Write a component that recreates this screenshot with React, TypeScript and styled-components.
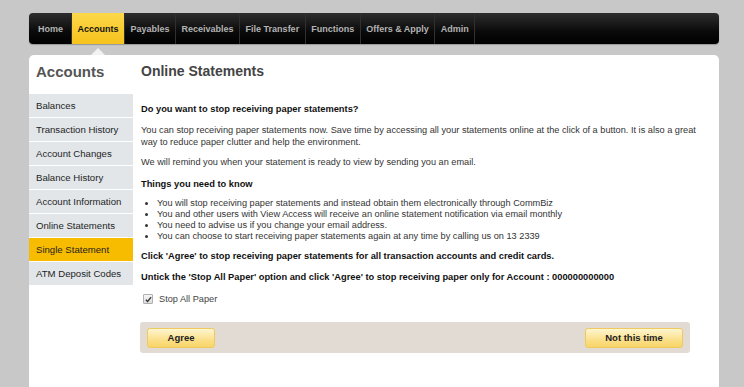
import React from 'react'
import styled, { createGlobalStyle } from 'styled-components'

const GlobalStyle = createGlobalStyle`
  html, body {
    margin: 0;
    padding: 0;
    background: #c8c8c8;
    font-family: 'Liberation Sans', Arial, sans-serif;
  }
`

const navItems = [
  'Home',
  'Accounts',
  'Payables',
  'Receivables',
  'File Transfer',
  'Functions',
  'Offers & Apply',
  'Admin',
]

const menuItems = [
  'Balances',
  'Transaction History',
  'Account Changes',
  'Balance History',
  'Account Information',
  'Online Statements',
  'Single Statement',
  'ATM Deposit Codes',
]

const bullets = [
  'You will stop receiving paper statements and instead obtain them electronically through CommBiz',
  'You and other users with View Access will receive an online statement notification via email monthly',
  'You need to advise us if you change your email address.',
  'You can choose to start receiving paper statements again at any time by calling us on 13 2339',
]

const Page = styled.div`
  padding: 13px 25px 0 29px;
  height: 387px;
  box-sizing: border-box;
  display: flex;
  flex-direction: column;
  overflow: hidden;
`
const NavBar = styled.nav`
  display: flex;
  height: 31px;
  border-radius: 4px;
  background: linear-gradient(#2e2e2e, #0a0a0a 60%, #000);
  box-shadow: 0 1px 1px rgba(0, 0, 0, 0.25);
`
const NavItem = styled.div<{ $active?: boolean }>`
  position: relative;
  display: flex;
  align-items: center;
  padding: 0 5.5px;
  font-size: 9px;
  font-weight: bold;
  color: ${(p) => (p.$active ? '#111' : '#b4b4b4')};
  background: ${(p) => (p.$active ? 'linear-gradient(#fcd84a, #f6c21c)' : 'transparent')};
  border-right: 1px solid #303030;
  &:first-child {
    padding-left: 9px;
    padding-right: 8px;
    border-radius: 4px 0 0 4px;
  }
  ${(p) =>
    p.$active &&
    `
    &::after {
      content: '';
      position: absolute;
      left: 50%;
      bottom: -11px;
      margin-left: -7px;
      border-left: 7px solid transparent;
      border-right: 7px solid transparent;
      border-bottom: 7px solid #f2f2f2;
    }
  `}
`
const Panel = styled.div`
  flex: 1;
  margin-top: 11px;
  display: flex;
  background: #fff;
  border-radius: 5px 5px 0 0;
`
const Sidebar = styled.aside`
  width: 104px;
  flex-shrink: 0;
`
const SideTitle = styled.h2`
  margin: 0;
  height: 39px;
  padding: 7px 0 0 7px;
  box-sizing: border-box;
  font-size: 15px;
  line-height: 20px;
  color: #555;
`
const MenuItem = styled.div<{ $active?: boolean }>`
  height: 23px;
  display: flex;
  align-items: center;
  padding-left: 7px;
  border-bottom: 1px solid #fff;
  font-size: 9.6px;
  color: #1e1e1e;
  background: ${(p) => (p.$active ? '#f7bb00' : '#e2e6e9')};
`
const Main = styled.main`
  flex: 1;
  padding: 6px 14px 0 8px;
  font-size: 9.2px;
  line-height: 12px;
  color: #333;
`
const Title = styled.h1`
  margin: 0 0 22px;
  font-size: 14px;
  line-height: 20px;
  color: #444;
`
const Para = styled.p<{ $strong?: boolean; $gap?: number }>`
  margin: 0 0 ${(p) => p.$gap ?? 8}px;
  font-size: ${(p) => (p.$strong ? '9.3px' : 'inherit')};
  font-weight: ${(p) => (p.$strong ? 'bold' : 'normal')};
  color: ${(p) => (p.$strong ? '#111' : '#333')};
`
const List = styled.ul`
  margin: 0 0 8px;
  padding-left: 16px;
  line-height: 11px;
`
const CheckRow = styled.label`
  display: flex;
  align-items: center;
  gap: 6px;
  margin: 1px 0 17px 2px;
  color: #444;
`
const CheckBox = styled.span`
  width: 8px;
  height: 8px;
  border: 1px solid #b0b0b0;
  border-radius: 1px;
  background: linear-gradient(#f6f6f6, #dcdcdc);
  display: flex;
  align-items: center;
  justify-content: center;
`
const ButtonBar = styled.div`
  display: flex;
  justify-content: space-between;
  align-items: center;
  height: 31px;
  padding: 0 7px;
  margin: 0 15px 0 -1px;
  border-radius: 3px;
  background: #e1dbd3;
`
const Button = styled.button<{ $width: number }>`
  width: ${(p) => p.$width}px;
  height: 20px;
  border: 1px solid #efca5e;
  border-radius: 3px;
  background: linear-gradient(#fff6d0, #fbe08a 60%, #f8d468);
  font-family: inherit;
  font-size: 9.5px;
  font-weight: bold;
  color: #222;
  padding: 0;
`

export default function App() {
  return (
    <>
      <GlobalStyle />
      <Page>
        <NavBar>
          {navItems.map((item) => (
            <NavItem key={item} $active={item === 'Accounts'}>
              {item}
            </NavItem>
          ))}
        </NavBar>
        <Panel>
          <Sidebar>
            <SideTitle>Accounts</SideTitle>
            {menuItems.map((item) => (
              <MenuItem key={item} $active={item === 'Single Statement'}>
                {item}
              </MenuItem>
            ))}
          </Sidebar>
          <Main>
            <Title>Online Statements</Title>
            <Para $strong $gap={9}>Do you want to stop receiving paper statements?</Para>
            <Para>
              You can stop receiving paper statements now. Save time by accessing all your
              statements online at the click of a button. It is also a great way to reduce paper
              clutter and help the environment.
            </Para>
            <Para $gap={10}>We will remind you when your statement is ready to view by sending you an email.</Para>
            <Para $strong>Things you need to know</Para>
            <List>
              {bullets.map((b) => (
                <li key={b}>{b}</li>
              ))}
            </List>
            <Para $strong $gap={9}>
              Click 'Agree' to stop receiving paper statements for all transaction accounts and credit cards.
            </Para>
            <Para $strong $gap={10}>
              Untick the 'Stop All Paper' option and click 'Agree' to stop receiving paper only for Account : 000000000000
            </Para>
            <CheckRow>
              <CheckBox>
                <svg width="7" height="7" viewBox="0 0 8 8">
                  <path d="M1 4.2 L3 6.3 L7 1.2" fill="none" stroke="#333" strokeWidth="1.5" />
                </svg>
              </CheckBox>
              Stop All Paper
            </CheckRow>
            <ButtonBar>
              <Button $width={68}>Agree</Button>
              <Button $width={98}>Not this time</Button>
            </ButtonBar>
          </Main>
        </Panel>
      </Page>
    </>
  )
}
